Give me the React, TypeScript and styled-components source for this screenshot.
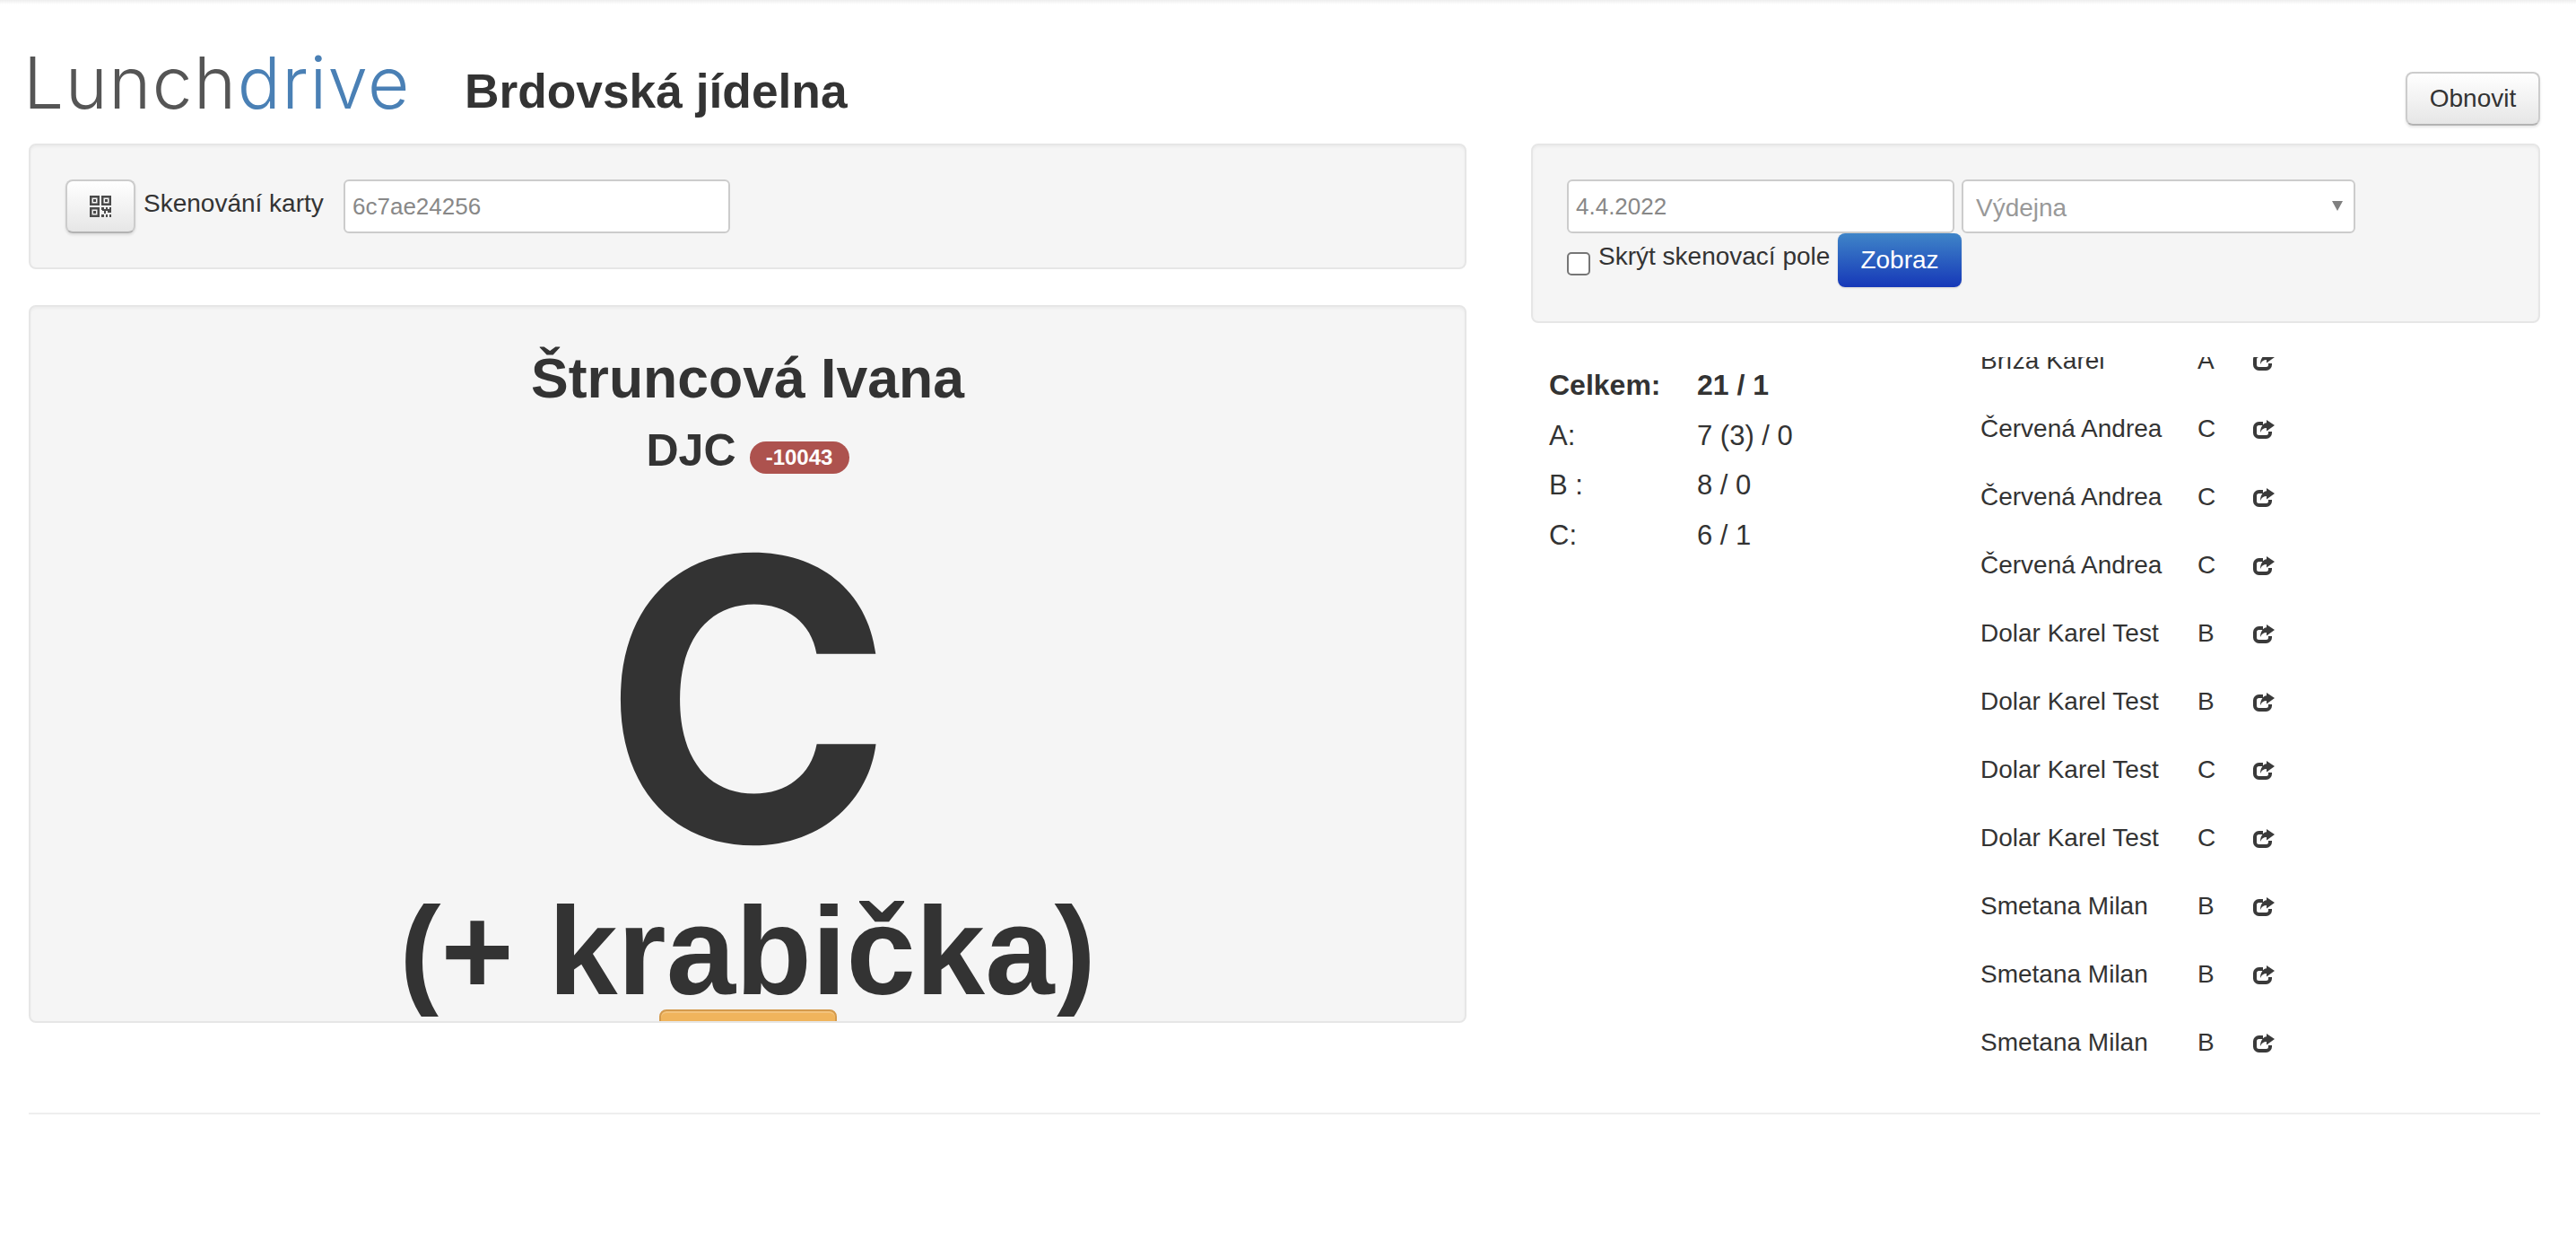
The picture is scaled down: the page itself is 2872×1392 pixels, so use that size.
import React from "react";
import styled, { createGlobalStyle } from "styled-components";

const Global = createGlobalStyle`
  html, body { margin: 0; padding: 0; background: #fff; }
  body { font-family: "Liberation Sans", Arial, sans-serif; font-size: 28px; color: #333; }
`;

const TopEdge = styled.div`
  height: 5px;
  background: linear-gradient(#eeeeee, #ffffff);
`;
const Page = styled.div`
  width: 2800px;
  margin-left: 32px;
`;
const Header = styled.header`
  height: 155px;
  display: flex;
  align-items: flex-start;
`;
const Logo = styled.div`
  font-family: Inter, "Open Sans", sans-serif;
  font-weight: 350;
  font-size: 80px;
  letter-spacing: 1.500px;
  line-height: 100px;
  margin-top: 37px;
  margin-left: -6px;
  width: 492px;
  color: #555;
  white-space: nowrap;
`;
const LogoAccent = styled.span`
  color: #4a80b5;
`;
const Venue = styled.h1`
  margin: 47px 0 0;
  flex: 1;
  font-size: 53.300px;
  line-height: 100px;
  font-weight: 700;
  color: #333;
`;
const Button = styled.button`
  font-family: "Liberation Sans", Arial, sans-serif;
  font-size: 28px;
  color: #333;
  border: 2px solid #ccc;
  border-bottom-color: #b3b3b3;
  border-radius: 8px;
  background: linear-gradient(#ffffff, #e6e6e6);
  box-shadow: 0 2px 3px rgba(0, 0, 0, 0.1);
  padding: 0;
  display: inline-flex;
  align-items: center;
  justify-content: center;
`;
const RefreshButton = styled(Button)`
  width: 150px;
  height: 60px;
  margin-top: 75px;
`;
const Columns = styled.div`
  display: grid;
  grid-template-columns: 1603px 1125px;
  column-gap: 72px;
`;
const Well = styled.section`
  box-sizing: border-box;
  background: #f5f5f5;
  border: 2px solid #e6e6e6;
  border-radius: 8px;
  box-shadow: inset 0 2px 3px rgba(0, 0, 0, 0.04);
`;
const ScanWell = styled(Well)`
  height: 140px;
  padding: 38px 39px;
  display: flex;
  align-items: flex-start;
`;
const QrButton = styled(Button)`
  width: 78px;
  height: 60px;
`;
const ScanLabel = styled.label`
  margin-left: 9px;
  width: 223px;
  line-height: 54px;
`;
const TextInput = styled.input`
  box-sizing: border-box;
  height: 60px;
  border: 2px solid #ccc;
  border-radius: 6px;
  background: #fff;
  padding: 0 8px;
  font-family: "Liberation Sans", Arial, sans-serif;
  font-size: 26px;
  color: #888;
  outline: none;
`;
const ScanInput = styled(TextInput)`
  width: 431px;
`;
const OrderWell = styled(Well)`
  margin-top: 40px;
  height: 800px;
  overflow: hidden;
  display: flex;
  flex-direction: column;
  align-items: center;
  color: #333;
  & > * {
    flex: none;
  }
`;
const PersonName = styled.div`
  margin-top: 39px;
  font-size: 62.500px;
  line-height: 80px;
  font-weight: 700;
`;
const Group = styled.div`
  margin-top: 11px;
  font-size: 50px;
  line-height: 60px;
  font-weight: 700;
  display: flex;
  align-items: center;
`;
const Badge = styled.span`
  margin-left: 15px;
  margin-top: 16px;
  width: 111px;
  height: 36px;
  border-radius: 18px;
  background: #ad524e;
  color: #fff;
  font-size: 24px;
  line-height: 36px;
  text-align: center;
`;
const BigLetter = styled.div`
  margin-top: 27px;
  font-family: Inter, "Liberation Sans", sans-serif;
  font-size: 437px;
  line-height: 440px;
  font-weight: 700;
`;
const Extra = styled.div`
  margin-top: -19px;
  font-size: 139px;
  line-height: 160px;
  font-weight: 700;
  height: 153px;
  overflow: hidden;
  white-space: nowrap;
`;
const OrangeButton = styled.div`
  box-sizing: border-box;
  width: 198px;
  height: 40px;
  margin-top: -8px;
  border: 2px solid #d49a4c;
  border-radius: 8px;
  background: #f0b45c;
  box-shadow: inset 0 2px 0 rgba(255, 255, 255, 0.2);
`;
const FilterWell = styled(Well)`
  height: 200px;
  padding: 38px 38px;
`;
const FilterRow = styled.div`
  display: flex;
  gap: 8px;
`;
const DateInput = styled(TextInput)`
  width: 432px;
`;
const SelectBox = styled.div`
  position: relative;
  &::after {
    content: "";
    position: absolute;
    right: 14px;
    top: 24px;
    border-left: 6px solid transparent;
    border-right: 6px solid transparent;
    border-top: 11px solid #808080;
  }
`;
const Select = styled.select`
  box-sizing: border-box;
  width: 439px;
  height: 60px;
  border: 2px solid #ccc;
  border-radius: 6px;
  background: #fff;
  padding: 2px 14px 0;
  appearance: none;
  font-family: "Liberation Sans", Arial, sans-serif;
  font-size: 28px;
  color: #999;
  outline: none;
`;
const ShowRow = styled.div`
  display: flex;
  align-items: flex-start;
  height: 60px;
`;
const CheckBox = styled.input`
  appearance: none;
  box-sizing: border-box;
  margin: 21px 9px 0 0;
  width: 26px;
  height: 26px;
  border: 2px solid #767676;
  border-radius: 5px;
  background: #fff;
`;
const HideLabel = styled.label`
  line-height: 52px;
  width: 267px;
`;
const ShowButton = styled(Button)`
  width: 138px;
  height: 60px;
  color: #fff;
  border: none;
  background: linear-gradient(#3f85c8, #1638b8);
  box-shadow: 0 1px 2px rgba(0, 0, 0, 0.15);
`;
const Results = styled.div`
  display: grid;
  grid-template-columns: 501px 1fr;
`;
const Stats = styled.dl`
  margin: 42px 0 0 20px;
  display: grid;
  grid-template-columns: 165px 1fr;
  grid-auto-rows: 55.700px;
  font-size: 31px;
  align-items: center;
`;
const StatKey = styled.dt<{ $strong?: boolean }>`
  font-weight: ${(p) => (p.$strong ? 700 : 400)};
  font-size: ${(p) => (p.$strong ? "32px" : "31px")};
`;
const StatValue = styled.dd<{ $strong?: boolean }>`
  margin: 0;
  font-weight: ${(p) => (p.$strong ? 700 : 400)};
  font-size: ${(p) => (p.$strong ? "32px" : "31px")};
`;
const ListViewport = styled.div`
  margin-top: 38px;
  height: 800px;
  overflow: hidden;
`;
const List = styled.ul`
  list-style: none;
  margin: -34px 0 0;
  padding: 0;
`;
const Row = styled.li`
  display: grid;
  grid-template-columns: 242px 62px 40px;
  height: 76px;
  align-items: center;
  line-height: 76px;
`;
const ShareLink = styled.span`
  display: inline-flex;
  align-items: center;
`;
const Rule = styled.hr`
  margin: 42px 0 0;
  border: none;
  border-top: 2px solid #eeeeee;
`;

const QrIcon = () => (
  <svg width="26" height="26" viewBox="0 0 26 26" fill="#4a4a4a">
    <path d="M1 1h11v11H1zM3.500 3.500v6h6v-6zM5 5h3v3H5zM14 1h11v11H14zM16.500 3.500v6h6v-6zM18 5h3v3h-3zM1 14h11v11H1zM3.500 16.500v6h6v-6zM5 18h3v3H5z" fillRule="evenodd" />
    <path d="M14 14h3v3h-3zM19 14h2v2h2v-2h2v6h-4v-2h-2v3h-2v-3h-2v-2h4zM14 22h3v3h-3zM19 22h2v3h-2zM23 22h2v3h-2z" />
  </svg>
);

const ShareIcon = () => (
  <svg width="24" height="21" viewBox="0 0 24 21">
    <path d="M11 4H6.500A4.500 4.500 0 0 0 2 8.500v6A4.500 4.500 0 0 0 6.500 19h8a4.500 4.500 0 0 0 4.500-4.500V13" fill="none" stroke="#3a3a3a" strokeWidth="4" />
    <path d="M15 0l9 6-9 6.500V9c-3.500 0-5.500 1.500-7 5C8 8.500 11 3.500 15 3.200z" fill="#3a3a3a" />
  </svg>
);

const rows: [string, string][] = [
  ["Bříza Karel", "A"],
  ["Červená Andrea", "C"],
  ["Červená Andrea", "C"],
  ["Červená Andrea", "C"],
  ["Dolar Karel Test", "B"],
  ["Dolar Karel Test", "B"],
  ["Dolar Karel Test", "C"],
  ["Dolar Karel Test", "C"],
  ["Smetana Milan", "B"],
  ["Smetana Milan", "B"],
  ["Smetana Milan", "B"],
];

export default function App() {
  return (
    <>
      <Global />
      <TopEdge />
      <Page>
        <Header>
          <Logo>
            Lunch<LogoAccent>drive</LogoAccent>
          </Logo>
          <Venue>Brdovská jídelna</Venue>
          <RefreshButton>Obnovit</RefreshButton>
        </Header>
        <Columns>
          <div>
            <ScanWell>
              <QrButton aria-label="QR">
                <QrIcon />
              </QrButton>
              <ScanLabel>Skenování karty</ScanLabel>
              <ScanInput defaultValue="6c7ae24256" />
            </ScanWell>
            <OrderWell>
              <PersonName>Štruncová Ivana</PersonName>
              <Group>
                DJC<Badge>-10043</Badge>
              </Group>
              <BigLetter>C</BigLetter>
              <Extra>(+ krabička)</Extra>
              <OrangeButton />
            </OrderWell>
          </div>
          <div>
            <FilterWell>
              <FilterRow>
                <DateInput defaultValue="4.4.2022" />
                <SelectBox>
                  <Select defaultValue="">
                    <option value="">Výdejna</option>
                  </Select>
                </SelectBox>
              </FilterRow>
              <ShowRow>
                <CheckBox type="checkbox" />
                <HideLabel>Skrýt skenovací pole</HideLabel>
                <ShowButton>Zobraz</ShowButton>
              </ShowRow>
            </FilterWell>
            <Results>
              <Stats>
                <StatKey $strong>Celkem:</StatKey>
                <StatValue $strong>21 / 1</StatValue>
                <StatKey>A:</StatKey>
                <StatValue>7 (3) / 0</StatValue>
                <StatKey>B :</StatKey>
                <StatValue>8 / 0</StatValue>
                <StatKey>C:</StatKey>
                <StatValue>6 / 1</StatValue>
              </Stats>
              <ListViewport>
                <List>
                  {rows.map(([name, meal], i) => (
                    <Row key={i}>
                      <span>{name}</span>
                      <span>{meal}</span>
                      <ShareLink>
                        <ShareIcon />
                      </ShareLink>
                    </Row>
                  ))}
                </List>
              </ListViewport>
            </Results>
          </div>
        </Columns>
        <Rule />
      </Page>
    </>
  );
}
